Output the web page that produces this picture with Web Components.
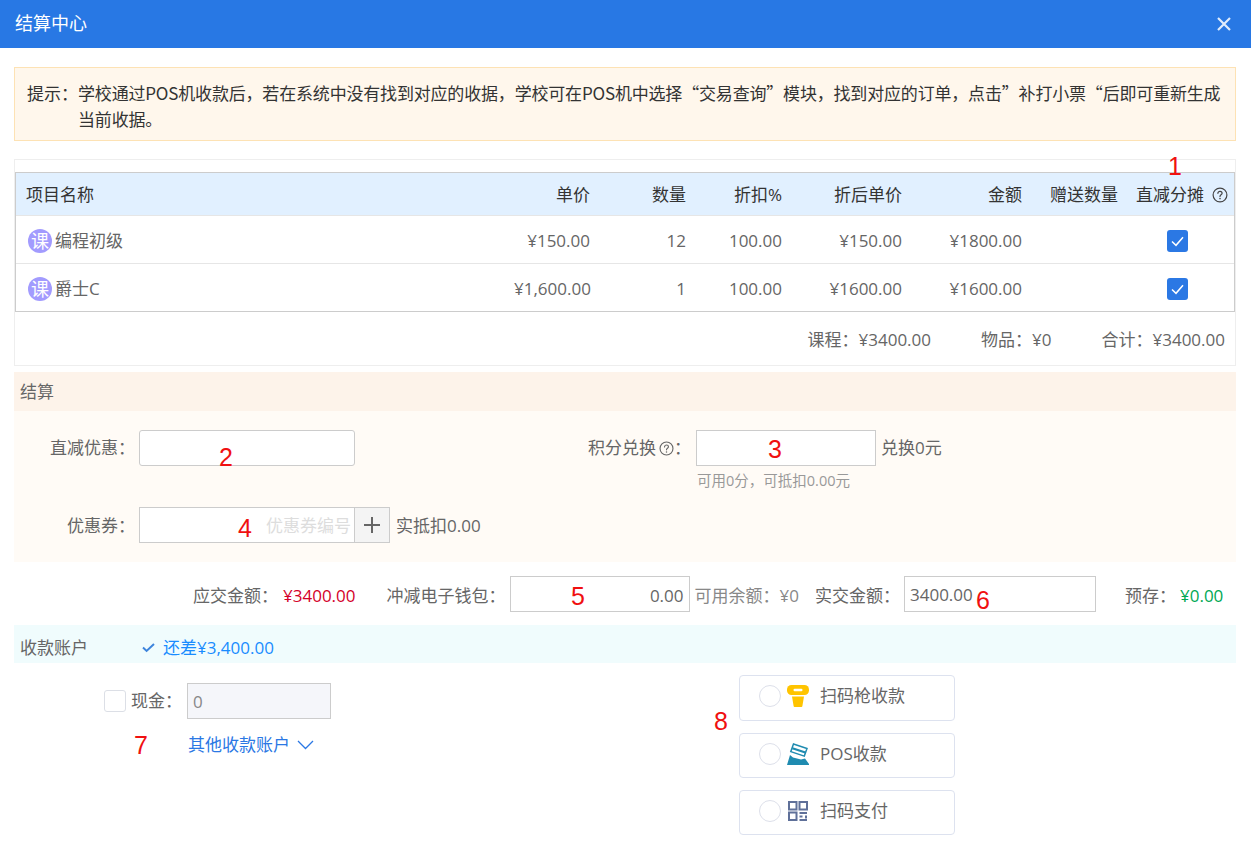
<!DOCTYPE html>
<html lang="zh">
<head>
<meta charset="utf-8">
<title>结算中心</title>
<style>
html,body{margin:0;padding:0;background:#fff}
body{font:17px/1.5 "Open Sans","Noto Sans CJK SC",sans-serif;color:#333;width:1251px;height:849px;overflow:hidden;position:relative}
</style>
</head>
<body>
<checkout-page></checkout-page>
<script>
const FONT='"Open Sans","Noto Sans CJK SC",sans-serif';
function def(name,css,html){
  customElements.define(name,class extends HTMLElement{
    constructor(){super();const s=this.attachShadow({mode:'open'});s.innerHTML='<style>'+css+'</style>'+html;}
  });
}
const helpIcon=(size,color)=>`<svg width="${size}" height="${size}" viewBox="0 0 16 16" fill="none" stroke="${color}" stroke-width="1.2" style="flex:none"><circle cx="8" cy="8" r="6.900"/><path d="M5.900 6.300c0-1.200 1-2 2.100-2s2.100.8 2.100 1.900c0 1.600-2.100 1.600-2.100 3.200" stroke-linecap="round"/><circle cx="8" cy="11.600" r=".8" fill="${color}" stroke="none"/></svg>`;

def('dialog-header',`:host{display:flex;align-items:center;justify-content:space-between;height:48px;background:#2878e4;color:#fff;padding:0 19px 2px 15px;box-sizing:border-box;font-size:18px}
svg{display:block;margin-top:2px}`,`<span>结算中心</span><svg width="16" height="16" viewBox="0 0 16 16" stroke="#e0ecfc" stroke-width="2.200" fill="none"><path d="M2 2l12 12M14 2L2 14"/></svg>`);

def('notice-box',`:host{display:flex;margin:19px 15px 0 14px;height:74px;box-sizing:border-box;background:#fff7ec;border:1px solid #fde2b4;padding:12px 12px 0 12px;font:17px/26px "Noto Sans CJK SC",sans-serif;color:#333}
b{font-weight:400;flex:none;width:51px}
span{letter-spacing:-.18px}`,`<b>提示：</b><span><slot></slot></span>`);

def('course-badge',`:host{display:inline-flex;width:24px;height:24px;border-radius:50%;background:#a29bfe;color:#fff;font-size:18px;line-height:24px;align-items:center;justify-content:center;flex:none}`,`课`);

def('check-box',`:host{display:block;width:21px;height:22px;border-radius:3px;background:#2b78e4}svg{display:block}`,`<svg width="21" height="22" viewBox="0 0 21 22" fill="none" stroke="#fff" stroke-width="1.500"><path d="M5 11.500l4 3.800 7-8"/></svg>`);

const COLS='grid-template-columns:1fr 96px 96px 96px 120px 120px 96px 106px';
def('table-row',`:host{display:grid;${COLS};height:48px;padding-top:3px;align-items:center;border-top:1px solid #e6e6e6;box-sizing:border-box;color:#666;text-align:right}
:host([head]){height:42px;padding-top:1px;border-top:0;background:#e1f0ff;color:#333}
::slotted(*){padding:0 10px}
`,`<slot></slot>`);

def('order-table',`:host{display:block;margin:0 15px 0 14px;height:207px;box-sizing:border-box;border:1px solid #eeeeee;padding-top:12px}
.t{border:1px solid #cccccc;height:140px;box-sizing:border-box}
.l{display:flex;align-items:center;justify-content:flex-start;gap:3px;padding:0 0 0 12px;text-align:left}
.h{display:flex;align-items:center;padding:0 0 0 8px;white-space:nowrap;color:#333;gap:8px}
.c{display:flex;justify-content:center;padding:0 8px 0 0}
.sum{display:flex;justify-content:flex-end;align-items:center;height:56px;padding-right:10px;color:#666;gap:50px}
span{display:block}
`,`<div class="t">
<table-row head><span style="text-align:left">项目名称</span><span>单价</span><span>数量</span><span>折扣%</span><span>折后单价</span><span>金额</span><span>赠送数量</span><span class="h">直减分摊${helpIcon(16,'#444')}</span></table-row>
<table-row><span class="l"><course-badge></course-badge>编程初级</span><span>¥150.00</span><span>12</span><span>100.00</span><span>¥150.00</span><span>¥1800.00</span><span></span><span class="c"><check-box></check-box></span></table-row>
<table-row><span class="l"><course-badge></course-badge>爵士C</span><span>¥1,600.00</span><span>1</span><span>100.00</span><span>¥1600.00</span><span>¥1600.00</span><span></span><span class="c"><check-box></check-box></span></table-row>
</div>
<div class="sum"><span>课程：¥3400.00</span><span>物品：¥0</span><span>合计：¥3400.00</span></div>`);

def('settle-form',`:host{display:block;margin:6px 15px 0 14px;color:#666}
.hd{height:39px;line-height:39px;background:#fdf3ea;padding-left:6px}
.bd{background:#fffbf6;height:151px;box-sizing:border-box;padding-top:19px}
.r{display:flex;align-items:flex-start}
.lb{width:121px;text-align:right;line-height:36px;flex:none;white-space:nowrap}
.in{box-sizing:border-box;height:36px;background:#fff;border:1px solid #ccc;flex:none}
.i1{width:216px;margin-left:4px;border-radius:3px}
.lb2{width:336px;display:flex;justify-content:flex-end;align-items:center;line-height:36px;height:36px}
.lb2 svg{margin-left:3px}
.i2{width:180px;margin-left:5px}
.tx{line-height:36px;margin-left:5px}
.hint{font-size:14.500px;color:#999;line-height:18px;margin:6px 0 0 683px;height:18px}
.i3{width:216px;margin-left:4px;border-right:0;text-align:right;padding-right:4px;color:#ddd;line-height:36px;white-space:nowrap}
.pl{box-sizing:border-box;width:36px;height:36px;border:1px solid #ccc;background:#f4f4f4;display:flex;align-items:center;justify-content:center;flex:none}
.r2{margin-top:17px}
.r2 .pl{margin-left:-1px}
.r2 .tx{margin-left:6px;line-height:38px}
.r2 .lb{line-height:38px}
`,`<div class="hd">结算</div><div class="bd">
<div class="r"><span class="lb">直减优惠：</span><div class="in i1"></div><span class="lb2">积分兑换${helpIcon(15,'#666')}：</span><div class="in i2"></div><span class="tx">兑换0元</span></div>
<div class="hint">可用0分，可抵扣0.00元</div>
<div class="r r2"><span class="lb">优惠券：</span><div class="in i3">优惠券编号</div><div class="pl"><svg width="18" height="18" viewBox="0 0 18 18" stroke="#666" stroke-width="2"><path d="M9 1v16M1 9h16"/></svg></div><span class="tx">实抵扣0.00</span></div>
</div>`);

def('pay-line',`:host{display:flex;align-items:flex-start;height:36px;margin-top:14px;padding-left:193px;color:#666;white-space:nowrap}
span{line-height:40px}
.in{box-sizing:border-box;height:36px;border:1px solid #ccc;background:#fff;line-height:38px;padding:0 5px;flex:none}
.a{color:#d4002a;margin-left:5px}.g{color:#00a854}
.p1{width:180px;text-align:right;margin-left:4px}
.p2{width:192px;margin-left:4px;line-height:36px}
`,`<span>应交金额：</span><span class="a">¥3400.00</span><span style="margin-left:31px">冲减电子钱包：</span><div class="in p1">0.00</div><span style="margin-left:5px;color:#888">可用余额：¥0</span><span style="margin-left:16px">实交金额：</span><div class="in p2">3400.00</div><span style="margin-left:29px">预存：</span><span class="g" style="margin-left:4px">¥0.00</span>`);

def('account-bar',`:host{display:flex;align-items:center;height:38px;margin:13px 15px 0 14px;background:#f0fcfd;color:#666;padding:7px 0 0 6px;box-sizing:border-box}
.lb{width:121px}
svg{display:block;margin-right:7px}
.m{color:#1a8cff}`,`<span class="lb">收款账户</span><svg width="15" height="15" viewBox="0 0 15 15" fill="none" stroke="#3d84dc" stroke-width="2"><path d="M2 7.500l3.600 3.400L13 4"/></svg><span class="m">还差¥3,400.00</span>`);

def('pay-option',`:host{display:flex;align-items:center;width:216px;height:46px;box-sizing:border-box;border:1px solid #dde2ef;border-radius:4px;padding:0 0 4px 19px;color:#666;background:#fff}
i{display:block;width:22px;height:22px;box-sizing:border-box;border:1px solid #dde0ea;border-radius:50%;margin-right:6px;flex:none}
.ic{display:flex;width:22px;height:22px;margin-right:11px;align-items:center;justify-content:center;flex:none}
`,`<i></i><span class="ic"><slot name="icon"></slot></span><slot></slot>`);

def('account-area',`:host{display:flex;margin:12px 0 0 0;color:#666;height:170px}
.left{width:739px;box-sizing:border-box;padding:8px 0 0 104px}
.row{display:flex;align-items:center;height:36px}
.row span{line-height:38px}
.cb{box-sizing:border-box;width:22px;height:22px;border:1px solid #dcdfe6;border-radius:3px;background:#fff;margin-right:5px}
.in{box-sizing:border-box;width:144px;height:36px;background:#f5f6fa;border:1px solid #ccc;line-height:36px;padding:0 5px;margin-left:5px;color:#888}
.more{display:flex;align-items:center;gap:7px;color:#2b78e4;margin:8px 0 0 84px;line-height:36px}
.right{display:flex;flex-direction:column;gap:12px}
`,`<div class="left"><div class="row"><div class="cb"></div><span>现金：</span><div class="in">0</div></div>
<div class="more">其他收款账户<svg width="17" height="10" viewBox="0 0 17 10" fill="none" stroke="#2b78e4" stroke-width="1.300"><path d="M1 1l7.500 7.500L16 1"/></svg></div></div>
<div class="right">
<pay-option><svg slot="icon" width="22" height="22" viewBox="0 0 22 22"><rect x="0" y="0" width="22" height="10" rx="4.500" fill="#ffc400"/><rect x="6.500" y="3.700" width="9" height="2.500" rx="1.200" fill="#fff"/><path d="M5 11.500h12l-1.600 9.500a1 1 0 0 1-1 .9H7.600a1 1 0 0 1-1-.9z" fill="#ffc400"/></svg>扫码枪收款</pay-option>
<pay-option style="height:45px"><svg slot="icon" width="22" height="22" viewBox="0 0 22 22"><path d="M6.500 1 20 5.500l-2.700 7.600-13.500-4.500z" fill="#fff" stroke="#1f8bb0" stroke-width="1.500"/><path d="M5.700 4.200 18.700 8.500l-.7 2-13-4.300z" fill="#1f8bb0"/><path d="M3 12l3 2.500 8 2 4-1 4 5.500v1H0z" fill="#1f8bb0"/></svg>POS收款</pay-option>
<pay-option style="height:45px"><svg slot="icon" width="20" height="20" viewBox="0 0 20 20" fill="none" stroke="#5f7099" stroke-width="2"><rect x="1" y="1" width="7.500" height="7.500"/><rect x="11.500" y="1" width="7.500" height="7.500"/><rect x="1" y="11.500" width="7.500" height="7.500"/><path d="M11.500 12h7.500M11.500 15.500h3M18 14.500v3M11.500 19h7.500"/></svg>扫码支付</pay-option>
</div>`);

def('red-mark',`:host{position:absolute;color:#f01010;font:25px/30px "Liberation Sans",sans-serif;transform:translate(-50%,-50%)}`,`<slot></slot>`);

def('checkout-page',`:host{display:block;position:relative;width:1251px;height:849px;font-family:${FONT}}`,`
<dialog-header></dialog-header>
<notice-box>学校通过POS机收款后，若在系统中没有找到对应的收据，学校可在POS机中选择“交易查询”模块，找到对应的订单，点击”补打小票“后即可重新生成当前收据。</notice-box>
<div style="height:18px"></div>
<order-table></order-table>
<settle-form></settle-form>
<pay-line></pay-line>
<account-bar></account-bar>
<account-area></account-area>
<red-mark style="left:1175px;top:166px">1</red-mark>
<red-mark style="left:226px;top:457px">2</red-mark>
<red-mark style="left:775px;top:449px">3</red-mark>
<red-mark style="left:245px;top:528px">4</red-mark>
<red-mark style="left:578px;top:596px">5</red-mark>
<red-mark style="left:983px;top:600px">6</red-mark>
<red-mark style="left:141px;top:745px">7</red-mark>
<red-mark style="left:721px;top:721px">8</red-mark>`);
</script>
</body>
</html>
